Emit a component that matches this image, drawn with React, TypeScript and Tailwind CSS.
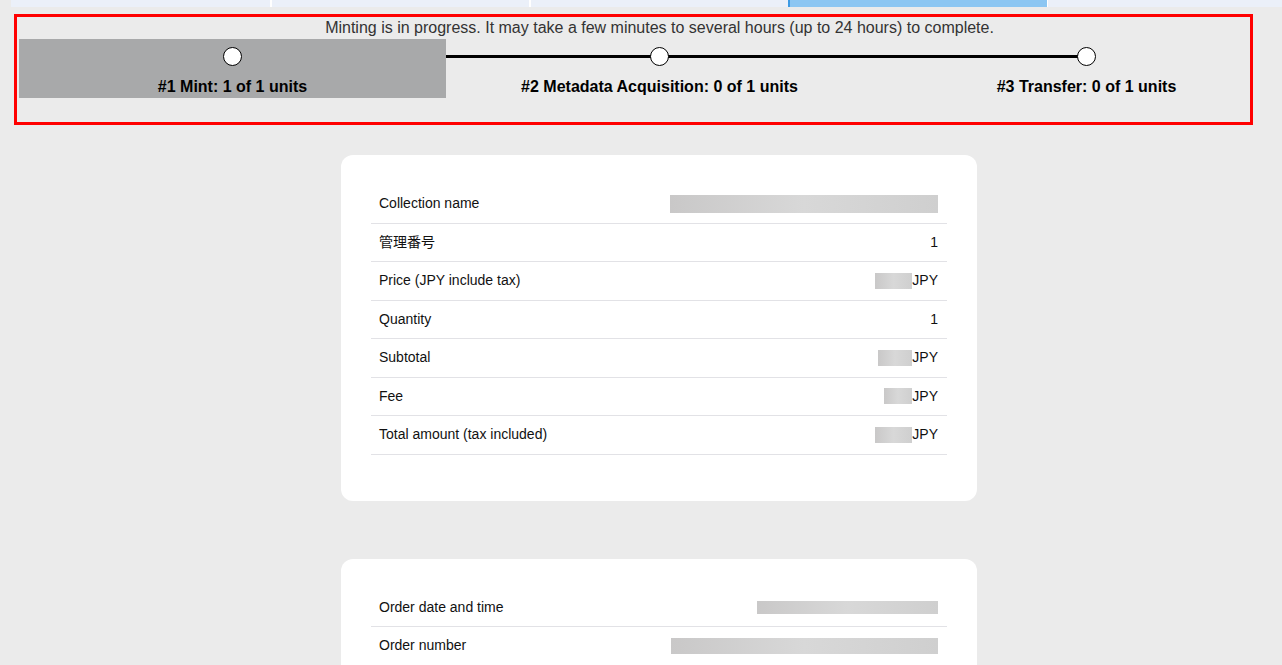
import React from "react";

const font = { fontFamily: '"Liberation Sans", Arial, "Noto Sans CJK JP", sans-serif' };

type Row = { label: string; value?: string; blur?: number; blurH?: number; unit?: string };

const orderRows: Row[] = [
  { label: "Collection name", blur: 268, blurH: 18 },
  { label: "管理番号", value: "1" },
  { label: "Price (JPY include tax)", blur: 37, unit: "JPY" },
  { label: "Quantity", value: "1" },
  { label: "Subtotal", blur: 34, unit: "JPY" },
  { label: "Fee", blur: 28, unit: "JPY" },
  { label: "Total amount (tax included)", blur: 37, unit: "JPY" },
];

const detailRows: Row[] = [
  { label: "Order date and time", blur: 181, blurH: 13 },
  { label: "Order number", blur: 267, blurH: 16 },
];

const steps = [
  { label: "#1 Mint: 1 of 1 units", done: true },
  { label: "#2 Metadata Acquisition: 0 of 1 units", done: false },
  { label: "#3 Transfer: 0 of 1 units", done: false },
];

function InfoRow({ row }: { row: Row }) {
  return (
    <div className="flex h-[38.5px] items-center justify-between border-b border-[#e2e2e6] pl-2 pr-[9px] text-[14px] text-[#111]">
      <span>{row.label}</span>
      <span className="flex items-center">
        {row.blur && (
          <span
            className="inline-block bg-gradient-to-r from-[#c9c8c8] via-[#d8d8d8] to-[#cfcfcf]"
            style={{ width: row.blur, height: row.blurH ?? 16 }}
          />
        )}
        {row.unit && <span>{row.unit}</span>}
        {row.value && <span>{row.value}</span>}
      </span>
    </div>
  );
}

function Card({ rows, className }: { rows: Row[]; className?: string }) {
  return (
    <div className={"ml-[341px] w-[636px] rounded-xl bg-white px-[30px] pt-[30px] pb-[46px] " + (className ?? "")}>
      {rows.map((row) => (
        <InfoRow key={row.label} row={row} />
      ))}
    </div>
  );
}

export default function App() {
  return (
    <main className="min-h-screen overflow-hidden bg-[#ebebeb]" style={font}>
      <div className="flex h-[7px] pl-[11px]">
        <div className="w-[259px] bg-[#ebf0f9]" />
        <div className="w-[2px] bg-white" />
        <div className="w-[257px] bg-[#ebf0f9]" />
        <div className="w-[2px] bg-white" />
        <div className="w-[257px] bg-[#ebf0f9]" />
        <div className="w-[259px] border-l-2 border-[#3d9be4] bg-[#8cc6f2]" />
        <div className="w-[1px] bg-white" />
        <div className="flex-1 bg-[#ebf0f9]" />
      </div>

      <section className="ml-[14px] mt-[7px] h-[111px] w-[1239px] border-[3px] border-[#ff0000] px-[2px]">
        <div className="w-[1281px]">
          <p className="h-[22px] whitespace-nowrap text-center text-[16px] leading-[22px] text-[#333]">
            Minting is in progress. It may take a few minutes to several hours (up to 24 hours) to complete.
          </p>
          <div className="relative flex h-[59px]">
            <div className="absolute left-[213px] top-[16px] h-[3px] w-[853px] bg-black" />
            {steps.map((step) => (
              <div
                key={step.label}
                className={"relative flex w-[427px] shrink-0 flex-col items-center " + (step.done ? "bg-[#a8a9aa]" : "")}
              >
                <div className="relative z-10 mt-[8px] h-[19px] w-[19px] rounded-full border border-black bg-white" />
                <div className="mt-[12px] text-[16px] font-bold leading-[18px] text-black">{step.label}</div>
              </div>
            ))}
          </div>
        </div>
      </section>

      <Card rows={orderRows} className="mt-[30px]" />
      <Card rows={detailRows} className="mt-[58px]" />
    </main>
  );
}
